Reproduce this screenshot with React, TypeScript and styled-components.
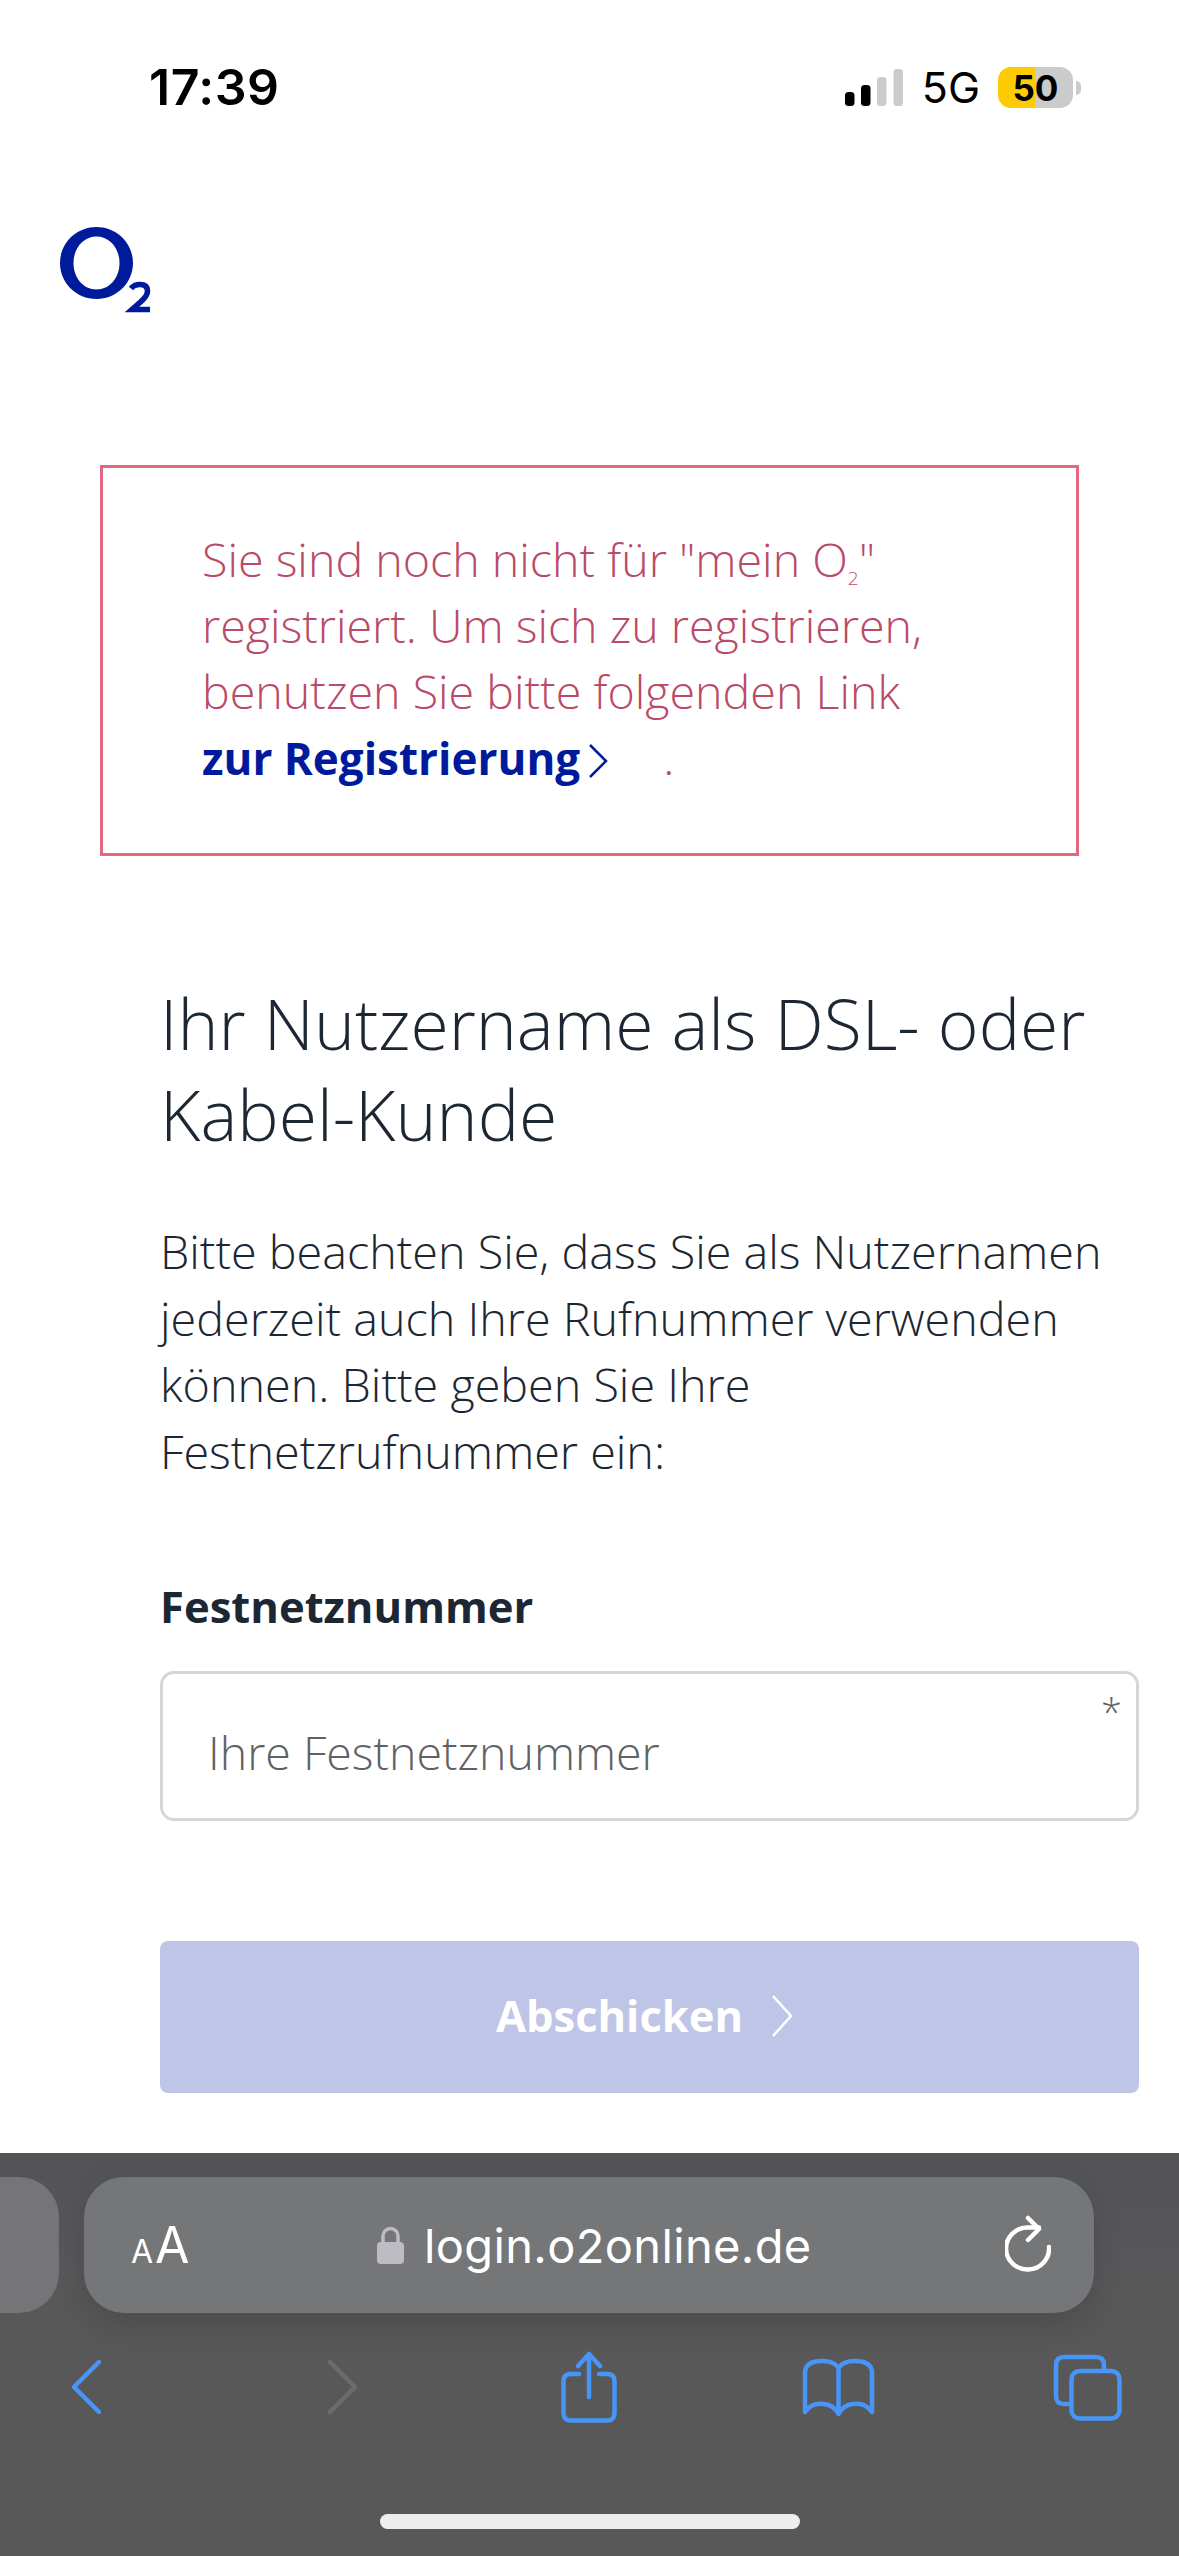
import React from 'react';
import styled, { createGlobalStyle } from 'styled-components';

const Global = createGlobalStyle`
  html, body { margin: 0; padding: 0; background: #fff; }
  * { box-sizing: border-box; }
`;

const BODY_FONT = `"Open Sans", "Noto Sans", sans-serif`;
const SYS_FONT = `Inter, "Liberation Sans", sans-serif`;

const S = {
  Page: styled.div`
    width: 1179px;
    height: 2556px;
    display: flex;
    flex-direction: column;
    overflow: hidden;
    font-family: ${BODY_FONT};
    background: #fff;
  `,
  StatusBar: styled.div`
    height: 175px;
    padding: 61px 98px 0 149px;
    display: flex;
    justify-content: space-between;
    align-items: flex-start;
    font-family: ${SYS_FONT};
    color: #000;
  `,
  Time: styled.div`
    font-size: 50px;
    line-height: 52px;
    font-weight: 600;
    letter-spacing: 0.5px;
  `,
  StatusRight: styled.div`
    display: flex;
    align-items: center;
    padding-top: 6px;
  `,
  Network: styled.span`
    font-size: 43px;
    line-height: 41px;
    font-weight: 400;
    margin: 0 18px 0 19px;
  `,
  Battery: styled.div<{ $level: number }>`
    width: 75px;
    height: 41px;
    border-radius: 13px;
    display: flex;
    align-items: center;
    justify-content: center;
    font-size: 35px;
    font-weight: 700;
    background: linear-gradient(90deg, #fdcb03 ${p => p.$level}%, #cbcbcb ${p => p.$level}%);
  `,
  BatteryNub: styled.div`
    width: 5px;
    height: 14px;
    margin-left: 3px;
    border-radius: 0 8px 8px 0;
    background: #cbcbcb;
  `,
  LogoRow: styled.div`
    padding-left: 60px;
    height: 290px;
    padding-top: 52px;
    display: block;
  `,
  Alert: styled.div`
    width: 979px;
    margin-left: 100px;
    height: 391px;
    padding: 58px 60px 0 99px;
    border: 3px solid #e5677f;
    color: #b94a68;
    font-size: 46.6px;
    line-height: 66px;
    font-weight: 350;
  `,
  Small: styled.sub`
    font-size: 19px;
    line-height: 0;
    vertical-align: -8px;
  `,
  RegLink: styled.a`
    display: inline-block;
    white-space: nowrap;
    color: #001a9c;
    font-size: 44px;
    font-weight: 700;
    text-decoration: none;
  `,
  Chevron: styled.svg<{ $color: string }>`
    fill: none;
    stroke: ${p => p.$color};
    stroke-width: 2.5;
  `,
  InlineChevron: styled.span`
    display: inline-block;
    width: 83px;
    padding-left: 8px;
    vertical-align: -3px;
    line-height: 0;
  `,
  Content: styled.div`
    padding: 0 40px 0 160px;
    color: #1c2733;
  `,
  Heading: styled.h1`
    margin: 122px 0 0;
    font-size: 69.6px;
    line-height: 91px;
    font-weight: 350;
  `,
  Lead: styled.p`
    margin: 58px 0 0;
    font-size: 46.7px;
    line-height: 66.5px;
    font-weight: 350;
  `,
  Label: styled.label`
    display: block;
    margin-top: 89px;
    font-size: 43.6px;
    line-height: 66px;
    font-weight: 700;
  `,
  Field: styled.div`
    position: relative;
    margin-top: 32px;
  `,
  Input: styled.input`
    display: block;
    width: 100%;
    height: 150px;
    padding: 12px 0 0 45px;
    border: 3px solid #d5d6da;
    border-radius: 14px;
    outline: none;
    font-family: ${BODY_FONT};
    font-size: 46.5px;
    font-weight: 350;
    &::placeholder { color: #5f6264; opacity: 1; }
  `,
  Required: styled.span`
    position: absolute;
    top: 20px;
    right: 17px;
    font-size: 38px;
    line-height: 40px;
    font-weight: 300;
    color: #5f6264;
  `,
  Submit: styled.button`
    width: 100%;
    height: 152px;
    margin-top: 120px;
    padding: 0 10px 3px 0;
    border: 0;
    border-radius: 8px;
    background: #bfc5e6;
    color: #fff;
    display: flex;
    align-items: center;
    justify-content: center;
    gap: 28px;
    font-family: ${BODY_FONT};
    font-size: 43.5px;
    font-weight: 700;
  `,
  Toolbar: styled.div`
    margin-top: auto;
    height: 403px;
    background: linear-gradient(180deg, #525357 0%, #58585a 30%, #585858 100%);
    display: flex;
    flex-direction: column;
    padding-top: 24px;
  `,
  UrlRow: styled.div`
    display: flex;
    gap: 25px;
    padding-right: 85px;
  `,
  SideTab: styled.div`
    width: 59px;
    height: 136px;
    border-radius: 0 40px 40px 0;
    background: #757577;
  `,
  UrlPill: styled.div`
    flex: 1;
    height: 136px;
    border-radius: 40px;
    background: #757678;
    box-shadow: 0 12px 30px rgba(0, 0, 0, 0.14);
    padding: 0 43px 0 47px;
    display: flex;
    align-items: center;
    justify-content: space-between;
    color: #fff;
    font-family: ${SYS_FONT};
  `,
  TextSize: styled.div`
    display: flex;
    align-items: baseline;
    gap: 2px;
    font-weight: 400;
  `,
  SmallA: styled.span`
    font-size: 32px;
  `,
  LargeA: styled.span`
    font-size: 50px;
  `,
  Address: styled.div`
    display: flex;
    align-items: center;
    gap: 20px;
    font-size: 47px;
    letter-spacing: 0.35px;
    margin-right: 6px;
  `,
  NavRow: styled.div`
    display: grid;
    grid-template-columns: 172px 342px 150px 348px 150px;
    margin-top: 34px;
    height: 80px;
    align-items: center;
    justify-items: center;
  `,
  HomeBar: styled.div`
    width: 420px;
    height: 15px;
    margin: 87px auto 0;
    border-radius: 8px;
    background: #eeeeee;
  `,
  NavIcon: styled.svg<{ $dim?: boolean }>`
    fill: none;
    stroke: ${p => (p.$dim ? '#6c6c6e' : '#4795f7')};
    stroke-width: 4.5;
    stroke-linecap: round;
    stroke-linejoin: round;
  `,
};

const Logo = () => (
  <svg width="92" height="88" viewBox="0 0 92 88" fill="none">
    <path
      fillRule="evenodd"
      fill="#001a9c"
      d="M36.5 0C56.7 0 73 16.1 73 36S56.7 72 36.5 72S0 55.9 0 36S16.3 0 36.5 0ZM36.5 9.5C23.5 9.5 13.5 21 13.5 36S23.5 62.5 36.5 62.5S59.5 51 59.5 36S49.5 9.5 36.5 9.5Z"
    />
    <path d="M71 61.5Q74 57.5 80 57.5Q87.5 57.5 87.5 64Q87.5 69 81 74.5L72 82.5H90" stroke="#001a9c" strokeWidth="5.6" />
  </svg>
);

const Signal = () => (
  <svg width="58" height="37" viewBox="0 0 58 37">
    <rect x="0" y="23" width="9.5" height="14" rx="3.5" fill="#000" />
    <rect x="16" y="16" width="9.5" height="21" rx="3.5" fill="#000" />
    <rect x="32" y="8" width="9.5" height="29" rx="3.5" fill="#cbcbcb" />
    <rect x="48.5" y="0" width="9.5" height="37" rx="3.5" fill="#cbcbcb" />
  </svg>
);

const Lock = () => (
  <svg width="27" height="38" viewBox="0 0 27 38" style={{ flex: 'none' }}>
    <path d="M6 18V10a7.5 7.5 0 0 1 15 0v8" fill="none" stroke="#bcbcc2" strokeWidth="3.5" />
    <rect x="0" y="16" width="27" height="22" rx="4" fill="#bcbcc2" />
  </svg>
);

const Reload = () => (
  <svg width="46" height="60" viewBox="0 0 46 60" fill="none" stroke="#fff" strokeWidth="4.5" strokeLinecap="round" strokeLinejoin="round">
    <path d="M44 32A21.5 21 0 1 1 22.5 12.5H34" />
    <path d="M23 3L34 14L23 25" />
  </svg>
);

const Back = () => (
  <S.NavIcon width="30" height="54" viewBox="0 0 30 54">
    <path d="M28 2L3 27L28 52" />
  </S.NavIcon>
);

const Forward = () => (
  <S.NavIcon $dim width="30" height="54" viewBox="0 0 30 54">
    <path d="M2 2L27 27L2 52" />
  </S.NavIcon>
);

const Share = () => (
  <S.NavIcon width="56" height="72" viewBox="0 0 56 72">
    <path d="M18 23H10Q2.5 23 2.5 30V62Q2.5 69.5 10 69.5H46Q53.5 69.5 53.5 62V30Q53.5 23 46 23H38" />
    <path d="M28 46V3M17 15L28 3L39 15" />
  </S.NavIcon>
);

const Book = () => (
  <S.NavIcon width="73" height="59" viewBox="0 0 73 59">
    <path d="M36.5 10Q32 3 20 3Q4 3 3 14V54Q10 44 22 46Q32 47 36.5 56Q41 47 51 46Q63 44 70 54V14Q69 3 53 3Q41 3 36.5 10V56" />
  </S.NavIcon>
);

const Tabs = () => (
  <S.NavIcon width="69" height="67" viewBox="0 0 69 67">
    <path d="M15 50H11Q3 50 3 42V11Q3 3 11 3H43Q51 3 51 11V17" />
    <rect x="18.5" y="17" width="48" height="47.5" rx="8" />
  </S.NavIcon>
);

const App = () => (
  <S.Page>
    <Global />
    <S.StatusBar>
      <S.Time>17:39</S.Time>
      <S.StatusRight>
        <Signal />
        <S.Network>5G</S.Network>
        <S.Battery $level={50}>50</S.Battery>
        <S.BatteryNub />
      </S.StatusRight>
    </S.StatusBar>
    <S.LogoRow>
      <Logo />
    </S.LogoRow>
    <S.Alert>
      Sie sind noch nicht für "mein O<S.Small>2</S.Small>" registriert. Um sich zu registrieren, benutzen Sie bitte folgenden Link{' '}
      <S.RegLink href="#">zur Registrierung</S.RegLink>
      <S.InlineChevron>
        <S.Chevron $color="#001a9c" width="20" height="34" viewBox="0 0 20 34">
          <path d="M2 1L18 17L2 33" />
        </S.Chevron>
      </S.InlineChevron>
      .
    </S.Alert>
    <S.Content>
      <S.Heading>Ihr Nutzername als DSL- oder Kabel-Kunde</S.Heading>
      <S.Lead>
        Bitte beachten Sie, dass Sie als Nutzernamen jederzeit auch Ihre Rufnummer verwenden können. Bitte geben Sie Ihre Festnetzrufnummer ein:
      </S.Lead>
      <S.Label>Festnetznummer</S.Label>
      <S.Field>
        <S.Input placeholder="Ihre Festnetznummer" />
        <S.Required>*</S.Required>
      </S.Field>
      <S.Submit>
        Abschicken
        <S.Chevron $color="#ffffff" width="22" height="42" viewBox="0 0 22 42">
          <path d="M2 1L20 21L2 41" />
        </S.Chevron>
      </S.Submit>
    </S.Content>
    <S.Toolbar>
      <S.UrlRow>
        <S.SideTab />
        <S.UrlPill>
          <S.TextSize>
            <S.SmallA>A</S.SmallA>
            <S.LargeA>A</S.LargeA>
          </S.TextSize>
          <S.Address>
            <Lock />
            login.o2online.de
          </S.Address>
          <Reload />
        </S.UrlPill>
      </S.UrlRow>
      <S.NavRow>
        <Back />
        <Forward />
        <Share />
        <Book />
        <Tabs />
      </S.NavRow>
      <S.HomeBar />
    </S.Toolbar>
  </S.Page>
);

export default App;
